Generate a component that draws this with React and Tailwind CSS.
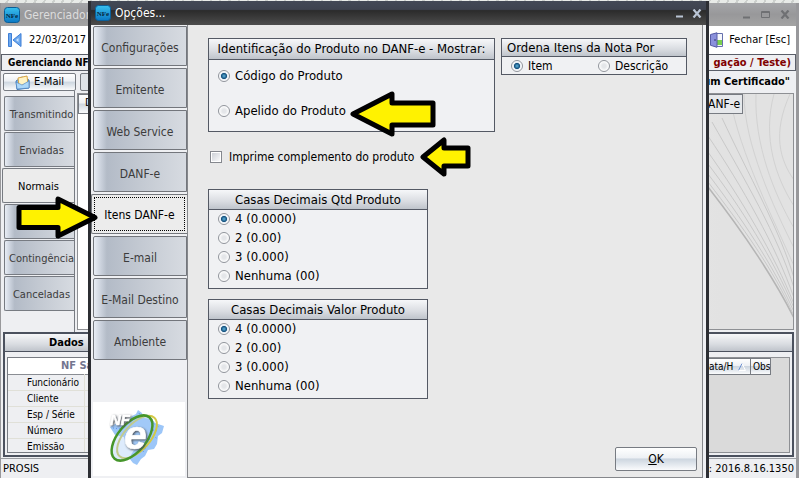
import { clsx } from 'clsx';

const optionTabs = ['Configurações', 'Emitente', 'Web Service', 'DANF-e', 'Itens DANF-e', 'E-mail', 'E-Mail Destino', 'Ambiente'];
const noteTabs = ['Transmitindo', 'Enviadas', 'Normais', '', 'Contingência', 'Canceladas'];
const noteFields = ['Funcionário', 'Cliente', 'Esp / Série', 'Número', 'Emissão'];
const decimals = ['4 (0.0000)', '2 (0.00)', '3 (0.000)', 'Nenhuma (00)'];

const tabFill = 'bg-[linear-gradient(90deg,#e8edf5_0%,#c9d0db_8%,#b3bbc7_14%,#c3c9d2_50%,#d7dbe1_100%)]';
const headFill = 'bg-[linear-gradient(#f6f7f9,#d9dce1_60%,#bfc4cb)]';
const buttonFill = 'bg-[linear-gradient(#ffffff_0%,#edf0f4_45%,#cdd6e0_50%,#e3e8ee_75%,#fafbfc_100%)]';

function AppIcon() {
  return (
    <svg width="16" height="16" viewBox="0 0 16 16" className="shrink-0">
      <defs>
        <linearGradient id="appBlue" x1="0" y1="0" x2="0" y2="1">
          <stop offset="0" stopColor="#39c0ee" />
          <stop offset="1" stopColor="#0a78c4" />
        </linearGradient>
      </defs>
      <rect x=".5" y=".5" width="15" height="15" rx="3" fill="url(#appBlue)" stroke="#0b5f98" />
      <text x="8" y="11" textAnchor="middle" fontSize="7" fontWeight="bold" fontFamily="Liberation Serif, serif" fill="#06283f">NFe</text>
    </svg>
  );
}

function WindowGlyphs({ maximize, className }) {
  return (
    <div className={clsx('flex items-center', maximize ? 'gap-2.5' : 'gap-2', className)}>
      <button aria-label="Minimizar">
        <svg width="9" height="9" viewBox="0 0 9 9"><path d="M1 7.5h7" stroke="currentColor" strokeWidth="2" /></svg>
      </button>
      {maximize && (
        <button aria-label="Maximizar">
          <svg width="9" height="9" viewBox="0 0 9 9"><path d="M.5 1.5h8v6h-8zM.5 2.5h8" fill="none" stroke="currentColor" /></svg>
        </button>
      )}
      <button aria-label="Fechar janela">
        <svg width="10" height="9" viewBox="0 0 10 9"><path d="M1.5.5l7 8M8.500.5l-7 8" stroke="currentColor" strokeWidth="2.2" /></svg>
      </button>
    </div>
  );
}

function Arrow({ flip, width, height, head, shaft, className }) {
  const w = width - 3;
  const mid = height / 2;
  const top = mid - shaft / 2 + 2;
  const bottom = mid + shaft / 2 - 2;
  const points = [
    [3, mid], [head, 3], [head, top], [w, top], [w, bottom], [head, bottom], [head, height - 3],
  ].map(([x, y]) => `${flip ? width - x : x},${y}`).join(' ');
  return (
    <svg width={width} height={height} className={clsx('absolute pointer-events-none', className)}>
      <polygon points={points} fill="#fff200" stroke="#000" strokeWidth="5" strokeLinejoin="round" />
    </svg>
  );
}

function Radio({ name, label, checked, className }) {
  return (
    <label className={clsx('flex items-center gap-[5px]', className)}>
      <input
        type="radio"
        name={name}
        defaultChecked={checked}
        className="size-3 shrink-0 appearance-none rounded-full border border-[#90949b] bg-[radial-gradient(circle,#e4e6e9_25%,#ffffff_70%)] checked:bg-[radial-gradient(circle,#5fb4dc_0%,#14507d_38%,#e8eef4_50%,#ffffff_70%)]"
      />
      {label}
    </label>
  );
}

function GroupBox({ title, center, headClass, className, children }) {
  return (
    <fieldset className={clsx('min-w-0 border border-[#545964] bg-[#f0f1f3]', className)}>
      <div role="heading" aria-level="2" className={clsx('truncate border-b border-[#545964] text-[13px]', headFill, center && 'text-center', headClass)}>
        {title}
      </div>
      {children}
    </fieldset>
  );
}

function NfeLogo() {
  return (
    <svg viewBox="0 0 92 74" className="mx-0.5 h-[74px] w-[92px] bg-white">
      <path d="M17 25l5-3 9 1 8-9 4-2 2-4 4 3 2 5 8 1 3 4 9 3-2 7-4 3-1 8-3 5-6 1-3 6-4 3-4 6-4-2-4-5 5-8-7-4-3-9-9-2z" fill="#9cc6f8" />
      <path d="M20 26l8 1M58 20l8 5M60 28l5 1M60 34l5 3M54 44l-4 6M57 37l-3 5M46 11l2 4" stroke="#5a93e6" strokeDasharray="1 2" />
      <ellipse cx="44" cy="35" rx="13" ry="26" transform="rotate(42 44 35)" fill="none" stroke="#d3c945" strokeWidth="2" />
      <ellipse cx="39" cy="36" rx="14" ry="27" transform="rotate(40 39 36)" fill="#a9cdf7" fillOpacity=".4" stroke="#46962b" strokeWidth="2.500" />
      <text fontFamily="Liberation Sans, sans-serif" fontWeight="bold" fontStyle="italic" fill="#fff" stroke="#fff" strokeWidth=".6" className="[filter:drop-shadow(1px_1px_1px_#4a5058)]">
        <tspan x="17" y="23" fontSize="15">NF</tspan>
        <tspan x="31" y="47" fontSize="41">e</tspan>
      </text>
    </svg>
  );
}

function Curves() {
  return (
    <svg viewBox="0 0 86 236" className="h-[236px] w-[86px]" fill="none" stroke="#c9c9c9">
      <path d="M0 93C35 138 65 182 86 224" stroke="#b5b5b5" strokeWidth="1.500" />
      <path d="M0 88C34 132 66 176 86 222M0 80C32 122 66 172 86 218M0 70C32 112 66 166 86 214M0 58C34 106 66 160 86 210" />
      <path d="M0 42C34 92 68 152 86 204M4 28C36 84 70 142 86 194M14 24C40 80 72 136 86 184" />
      <path d="M22 4C32 60 66 126 86 172M36 0C36 50 66 114 86 154M48 0C46 50 66 100 86 134M66 0C54 44 68 84 86 112M82 0C64 40 72 66 86 86" stroke="#d2d2d2" />
    </svg>
  );
}

function MainWindow() {
  return (
    <main className="flex h-full flex-col bg-[#eeeff2] text-[11px] leading-4 text-black">
      <div className="h-[3px] shrink-0 bg-[repeating-linear-gradient(120deg,#e8ebe8_0_6px,#ccd0cd_6px_8px)]" />
      <div className="flex min-h-0 flex-1 flex-col border-l border-r-3 border-[#98989b]">
        <header className="flex h-[23px] shrink-0 items-center bg-[linear-gradient(#a5a6a9,#98989a_50%,#a3a3a3)] pl-[3px] pr-1.5 text-[12px] text-[#dddddd]">
          <AppIcon />
          <span className="ml-1">Gerenciador</span>
          <WindowGlyphs maximize className="ml-auto text-[#6f7073]" />
        </header>
        <div className="flex h-7 shrink-0 items-center bg-white px-1.5">
          <svg width="16" height="16" viewBox="0 0 16 16">
            <path d="M1.500 1.500h3v13h-3zM14 1.500v13L6 8z" fill="#6ca8ee" stroke="#3f7fd6" strokeLinejoin="round" />
            <path d="M11.500 6v4L9 8z" fill="#cfe3fb" />
          </svg>
          <span className="ml-1.5">22/03/2017</span>
          <button className="ml-auto flex items-center gap-1">
            <svg width="16" height="16" viewBox="0 0 16 16">
              <path d="M6 1.500h7.500v13H6z" fill="#f5f7fb" stroke="#6670ad" />
              <path d="M8 8h5v5H8z" fill="#7bd04f" />
              <path d="M1.500 2.500L8 .8v14.500l-6.500-2z" fill="#8b91dc" stroke="#565ca5" />
              <path d="M6 7v2" stroke="#303675" />
            </svg>
            Fechar [Esc]
          </button>
        </div>
        <div className="flex h-[17px] shrink-0 items-center justify-between border border-[#5b5f69] px-1 pl-1.5 font-bold">
          <span className="text-[10px]">Gerenciando NF-</span>
          <span className="text-[#800000]">gação / Teste)</span>
        </div>
        <div className="flex shrink-0 items-center pl-0.5 pr-1.5 pt-0.5">
          <button className={clsx('mr-1 flex h-[18px] w-[73px] items-center justify-center gap-1 rounded-xs border border-[#777b82]', buttonFill)}>
            <svg width="15" height="15" viewBox="0 0 15 15">
              <path d="M1 6l6-4 7 3v8l-12 1.500z" fill="#7fb9ef" stroke="#447bb8" />
              <path d="M3 3l9-2 1 8-9 2z" fill="#fff3c4" stroke="#d9a441" />
              <path d="M1 7l6 3 7-4v7L2 14z" fill="#acd8fa" stroke="#447bb8" strokeWidth=".6" />
            </svg>
            E-Mail
          </button>
          <button aria-label="Nota" className="h-[18px] w-20 rounded-xs border border-[#777b82] bg-[#dfe3e8]" />
          <span className="ml-auto font-bold">um Certificado"</span>
        </div>

        <div className="flex min-h-0 flex-1">
          <nav className="flex w-[74px] shrink-0 flex-col gap-px border-r border-[#777b82] pt-[5px]">
            {noteTabs.map((tab) => (
              <button
                key={tab}
                className={clsx(
                  'h-[35px] shrink-0 overflow-hidden rounded-l-xs border border-r-0 border-[#777b82] pt-0.5',
                  tab === 'Normais' ? 'ml-px bg-[#ececec]' : clsx('ml-[3px] pl-1 text-[#3c3c3c]', tabFill)
                )}
              >
                {tab}
              </button>
            ))}
          </nav>
          <section className="mx-0.5 mb-0.5 mt-0.5 flex flex-1 items-start justify-between border border-[#8e9094] bg-[linear-gradient(90deg,#ffffff_15%,#e2e2e2_90%)]">
            <div className={clsx('h-5 w-20 border border-[#777b82] pl-1.5', buttonFill)}>D</div>
            <div className="flex w-[85px] flex-col">
              <div className="grid">
                <div className="col-start-1 row-start-1 h-[234px] overflow-hidden"><Curves /></div>
                <div className="col-start-1 row-start-1 h-5 w-[35px] border border-l-0 border-[#777b82] bg-[#e6e8eb] text-[12px] leading-[18px]">ANF-e</div>
              </div>
            </div>
          </section>
        </div>

        <div className="mx-0.5 flex h-[125px] shrink-0">
          <section className="flex flex-1 flex-col border-2 border-[#4b515e]">
            <h2 className={clsx('h-[18px] border-b border-[#4b515e] pl-11 pt-px font-bold', headFill)}>Dados</h2>
            <div className="m-0.5 mt-[5px] flex-1 overflow-hidden border border-[#777b82]">
              <table className="w-full">
                <thead>
                  <tr className="h-4 border-b border-[#8a8d93] bg-white text-left text-[#73758f]">
                    <th colSpan="2" className="pl-[53px]">NF Sa</th>
                  </tr>
                </thead>
                <tbody>
                  {noteFields.map((field) => (
                    <tr key={field} className="h-4 border-b border-[#e0e0d8] text-[10px] leading-[15px]">
                      <td className="w-[76px] border-r border-[#e0e0d8] pl-[19px]">{field}</td>
                      <td />
                    </tr>
                  ))}
                </tbody>
              </table>
            </div>
          </section>
          <section className="flex flex-1 flex-col border-2 border-[#4b515e]">
            <div className={clsx('h-[18px] border-b border-[#4b515e]', headFill)} />
            <div className="m-0.5 mt-[5px] flex flex-1 items-start justify-end border border-[#8e9094] bg-[#dadada] pr-[18px] text-[10px]">
              <div className={clsx('flex h-[17px] w-[42px] items-center justify-between border border-l-0 border-[#777b82] pr-1', buttonFill)}>
                ata/H
                <svg width="8" height="8" viewBox="0 0 8 8"><path d="M.5 7.500l3.500-7" stroke="#6c8fd0" /><path d="M4 .5l3.500 7h-7" fill="none" stroke="#fff" /></svg>
              </div>
              <div className={clsx('h-[17px] w-5 overflow-hidden border border-l-0 border-[#777b82] pl-0.5', buttonFill)}>Obs</div>
            </div>
          </section>
        </div>
        <footer className="mt-px flex h-5 shrink-0 items-center justify-between border-t border-[#9a9da2] pl-0.5 pr-0.5">
          <span>PROSIS</span>
          <span>: 2016.8.16.1350</span>
        </footer>
      </div>
    </main>
  );
}

function OptionsDialog() {
  return (
    <div role="dialog" aria-label="Opções" className="absolute bottom-0 left-[88px] right-[90px] top-px flex flex-col border-x-3 border-[#2c2e33] bg-[#eff0f3] text-[12px] leading-4 text-black">
      <header className="flex h-6 shrink-0 items-center bg-[linear-gradient(#434956_0%,#3e434f_35%,#2b2b2b_40%,#4c4c4c_100%)] pl-1 pr-1 text-[12px] text-white">
        <AppIcon />
        <span className="ml-1">Opções...</span>
        <WindowGlyphs className="ml-auto text-[#b9c4d4]" />
      </header>
      <div className="flex min-h-0 flex-1">
        <aside className="flex w-24 shrink-0 flex-col">
          <nav className="flex flex-col gap-0.5 pt-px">
            {optionTabs.map((tab) => (
              <button
                key={tab}
                className={clsx(
                  'h-10 rounded-l-xs border border-[#73767c]',
                  tab === 'Itens DANF-e' ? 'border-r-0 bg-[#ececec] p-0.5' : clsx('ml-0.5 pt-[3px] text-[#3c3c3c]', tabFill)
                )}
              >
                {tab === 'Itens DANF-e' ? (
                  <span className="flex h-full items-center justify-center border border-dotted border-black pt-0.5">{tab}</span>
                ) : tab}
              </button>
            ))}
          </nav>
          <div className="mb-0.5 mt-auto"><NfeLogo /></div>
        </aside>
        <form className="mr-[3px] flex min-w-0 flex-1 flex-col border border-t-0 border-[#85878b] bg-[#e9e9e9] px-5 pb-1.5 pr-[5px] pt-[13px]">
          <div className="flex items-start gap-1.5">
            <GroupBox title="Identificação do Produto no DANF-e - Mostrar:" center headClass="h-[21px] leading-5" className="w-[287px]">
              <div className="flex h-[71px] flex-col gap-[19px] pl-[9px] pt-2 text-[13px]">
                <Radio name="identificacao" label="Código do Produto" checked />
                <Radio name="identificacao" label="Apelido do Produto" />
              </div>
            </GroupBox>
            <GroupBox title="Ordena Itens da Nota Por" headClass="h-[18px] pl-[5px] leading-[18px]" className="w-[186px]">
              <div className="flex h-[17px] items-center pl-[9px]">
                <Radio name="ordem" label="Item" checked className="w-[87px]" />
                <Radio name="ordem" label="Descrição" />
              </div>
            </GroupBox>
          </div>
          <label className="mt-[17px] flex items-center gap-[7px] pl-0.5">
            <input type="checkbox" className="size-3 appearance-none border border-[#85888e] bg-[linear-gradient(135deg,#c8ccd3,#ffffff)] shadow-[inset_0_0_0_1px_#ffffff]" />
            Imprime complemento do produto
          </label>
          <div className="mt-6 flex w-[220px] flex-col gap-2.5">
            {['Qtd', 'Valor'].map((kind) => (
              <GroupBox key={kind} title={`Casas Decimais ${kind} Produto`} center headClass="h-5 leading-5">
                <div className="flex flex-col gap-[3px] pb-1 pl-[9px] pt-px text-[13px]">
                  {decimals.map((d, i) => (
                    <Radio key={d} name={`casas-${kind}`} label={d} checked={i === 0} />
                  ))}
                </div>
              </GroupBox>
            ))}
          </div>
          <button type="button" className={clsx('mt-auto h-6 w-[82px] self-end rounded-xs border border-[#777b82]', buttonFill)}>
            <span className="underline">O</span>K
          </button>
        </form>
      </div>
    </div>
  );
}

export default function App() {
  return (
    <div className="relative h-screen min-h-[478px] w-full overflow-hidden font-['DejaVu_Sans_Condensed','DejaVu_Sans',sans-serif]">
      <MainWindow />
      <OptionsDialog />
      <Arrow width={86} height={46} head={42} shaft={26} className="left-[350px] top-[91px]" />
      <Arrow width={51} height={40} head={24} shaft={22} className="left-[420px] top-[137px]" />
      <Arrow flip width={82} height={43} head={40} shaft={24} className="left-[16px] top-[196px]" />
    </div>
  );
}
